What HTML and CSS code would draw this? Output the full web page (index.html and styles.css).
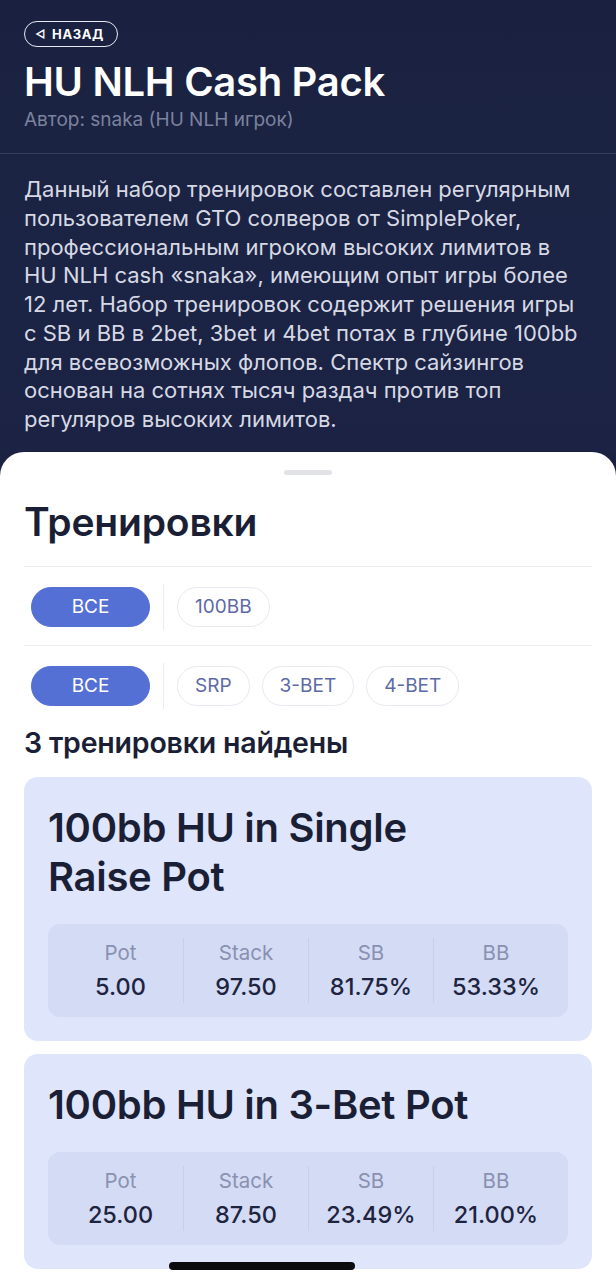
FILE: index.html
```html
<!DOCTYPE html>
<html lang="ru">
<head>
<meta charset="utf-8">
<title>HU NLH Cash Pack</title>
<link rel="stylesheet" href="styles.css">
</head>
<body>
<div class="screen">
  <header class="hero">
    <div class="hero-top">
      <button class="back"><span class="back-arrow">&#9665;</span>НАЗАД</button>
      <h1 class="hero-title">HU NLH Cash Pack</h1>
      <p class="hero-author">Автор: snaka (HU NLH игрок)</p>
    </div>
    <p class="hero-desc">Данный набор тренировок составлен регулярным<br>пользователем GTO солверов от SimplePoker,<br>профессиональным игроком высоких лимитов в<br>HU NLH cash «snaka», имеющим опыт игры более<br>12 лет. Набор тренировок содержит решения игры<br>с SB и BB в 2bet, 3bet и 4bet потах в глубине 100bb<br>для всевозможных флопов. Спектр сайзингов<br>основан на сотнях тысяч раздач против топ<br>регуляров высоких лимитов.</p>
  </header>

  <section class="sheet">
    <div class="handle"></div>
    <h2 class="sheet-title">Тренировки</h2>
    <div class="filters">
      <div class="chip-row">
        <span class="chip chip-active">ВСЕ</span>
        <span class="chip-sep"></span>
        <span class="chip">100BB</span>
      </div>
      <div class="chip-row chip-row-last">
        <span class="chip chip-active">ВСЕ</span>
        <span class="chip-sep"></span>
        <span class="chip">SRP</span>
        <span class="chip">3-BET</span>
        <span class="chip">4-BET</span>
      </div>
    </div>
    <h3 class="found">3 тренировки найдены</h3>

    <article class="card">
      <h4 class="card-title">100bb HU in Single<br>Raise Pot</h4>
      <div class="stats">
        <div class="stat"><span class="stat-label">Pot</span><span class="stat-value">5.00</span></div>
        <div class="stat"><span class="stat-label">Stack</span><span class="stat-value">97.50</span></div>
        <div class="stat"><span class="stat-label">SB</span><span class="stat-value">81.75%</span></div>
        <div class="stat"><span class="stat-label">BB</span><span class="stat-value">53.33%</span></div>
      </div>
    </article>

    <article class="card">
      <h4 class="card-title">100bb HU in 3-Bet Pot</h4>
      <div class="stats">
        <div class="stat"><span class="stat-label">Pot</span><span class="stat-value">25.00</span></div>
        <div class="stat"><span class="stat-label">Stack</span><span class="stat-value">87.50</span></div>
        <div class="stat"><span class="stat-label">SB</span><span class="stat-value">23.49%</span></div>
        <div class="stat"><span class="stat-label">BB</span><span class="stat-value">21.00%</span></div>
      </div>
    </article>
  </section>
  <div class="home-indicator"></div>
</div>
</body>
</html>
```

FILE: styles.css
```css
* { box-sizing: border-box; }
html, body { margin: 0; padding: 0; }
body {
  font-family: Inter, "Noto Sans", "DejaVu Sans", sans-serif;
  background: #1b2241;
  width: 616px;
  height: 1280px;
  overflow: hidden;
}
.screen { position: relative; height: 1280px; overflow: hidden; }

.hero {
  background: linear-gradient(180deg, #1a2140 0%, #1c2445 60%, #1b2243 100%);
  color: #fff;
}
.hero-top {
  padding: 21px 24px 21px;
  border-bottom: 1px solid rgba(255,255,255,0.12);
}
.back {
  display: inline-flex;
  align-items: center;
  gap: 6px;
  height: 26px;
  padding: 0 13px 0 10px;
  border: 1.5px solid #e8eaf2;
  border-radius: 13px;
  background: transparent;
  color: #fff;
  font-family: Inter, sans-serif;
  font-size: 13px;
  font-weight: 700;
  letter-spacing: 0.6px;
}
.back-arrow { font-size: 11px; line-height: 1; }
.hero-title {
  margin: 12px 0 0;
  font-size: 40px;
  line-height: 46px;
  font-weight: 600;
  letter-spacing: -0.3px;
}
.hero-author {
  margin: 3px 0 0;
  font-size: 19px;
  line-height: 24px;
  color: #7b829e;
}
.hero-desc {
  margin: 0;
  padding: 21px 20px 18px 24px;
  font-size: 22px;
  line-height: 28.75px;
  color: #d6d9e4;
  font-weight: 400;
}

.sheet {
  background: #fff;
  border-radius: 24px 24px 0 0;
  padding: 0 24px 40px;
  min-height: 900px;
}
.handle {
  width: 48px;
  height: 5px;
  border-radius: 3px;
  background: #e2e3e7;
  margin: 0 auto;
  position: relative;
  top: 18px;
}
.sheet-title {
  margin: 45px 0 0;
  font-size: 39px;
  line-height: 40px;
  font-weight: 600;
  color: #1b1f35;
  letter-spacing: -0.2px;
}
.filters {
  margin-top: 24px;
  border-top: 1px solid #ececf0;
}
.chip-row {
  display: flex;
  align-items: center;
  gap: 12px;
  padding: 17px 0 15px 7px;
  border-bottom: 1px solid #ececf0;
}
.chip-row-last { border-bottom: none; padding-bottom: 0; }
.chip {
  height: 40px;
  display: inline-flex;
  align-items: center;
  justify-content: center;
  padding: 0 17px;
  border: 1.5px solid #e7e9f0;
  border-radius: 20px;
  font-size: 19px;
  color: #5d6aa6;
}
.chip-active {
  width: 119px;
  background: #5570d5;
  border-color: #5570d5;
  color: #fff;
}
.chip-sep {
  width: 1px;
  height: 46px;
  background: #ececf0;
  margin: 0 1px;
}
.found {
  margin: 18px 0 0;
  font-size: 28.5px;
  line-height: 32px;
  font-weight: 600;
  color: #1b1f35;
  letter-spacing: -0.2px;
}
.card {
  margin-top: 18px;
  background: #dfe5fb;
  border-radius: 14px;
  padding: 26px 24px 24px;
}
.card + .card { margin-top: 13px; }
.card-title {
  margin: 0;
  font-size: 40px;
  line-height: 49px;
  font-weight: 600;
  color: #1b1f35;
  letter-spacing: -0.3px;
}
.stats {
  margin-top: 23px;
  background: #d3dbf5;
  border-radius: 12px;
  padding: 14px 10px;
  display: grid;
  grid-template-columns: repeat(4, 1fr);
}
.stat {
  display: flex;
  flex-direction: column;
  align-items: center;
  gap: 7px;
  padding: 2px 0;
}
.stat + .stat { border-left: 1px solid #c6cfee; }
.stat-label {
  font-size: 20.5px;
  line-height: 25px;
  color: #8a91b0;
}
.stat-value {
  font-size: 23.5px;
  line-height: 29px;
  font-weight: 500;
  color: #1e2440;
}
.home-indicator {
  position: absolute;
  left: 169px;
  top: 1262px;
  width: 186px;
  height: 8px;
  border-radius: 4px;
  background: #0b0b0e;
}
```
